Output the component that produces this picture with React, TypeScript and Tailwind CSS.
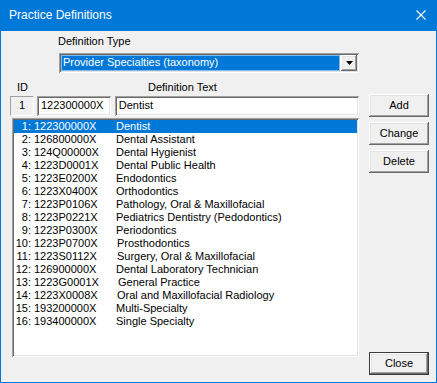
import React from 'react';

const font = "font-['Liberation_Sans',Arial,sans-serif]";

const raised =
  'shadow-[inset_-1px_-1px_0_#696969,inset_1px_1px_0_#ffffff,inset_-2px_-2px_0_#a0a0a0,inset_2px_2px_0_#e3e3e3]';
const sunken =
  'shadow-[inset_1px_1px_0_#a0a0a0,inset_-1px_-1px_0_#ffffff,inset_2px_2px_0_#696969,inset_-2px_-2px_0_#e3e3e3]';

const specialties: [number, string, string, number][] = [
  [1, '122300000X', 'Dentist', 0],
  [2, '126800000X', 'Dental Assistant', 0],
  [3, '124Q00000X', 'Dental Hygienist', 0],
  [4, '1223D0001X', 'Dental Public Health', 0],
  [5, '1223E0200X', 'Endodontics', 0],
  [6, '1223X0400X', 'Orthodontics', 0],
  [7, '1223P0106X', 'Pathology, Oral & Maxillofacial', 0],
  [8, '1223P0221X', 'Pediatrics Dentistry (Pedodontics)', 0],
  [9, '1223P0300X', 'Periodontics', 0],
  [10, '1223P0700X', 'Prosthodontics', 1],
  [11, '1223S0112X', 'Surgery, Oral & Maxillofacial', 1],
  [12, '126900000X', 'Dental Laboratory Technician', 0],
  [13, '1223G0001X', 'General Practice', 2],
  [14, '1223X0008X', 'Oral and Maxillofacial Radiology', 1],
  [15, '193200000X', 'Multi-Specialty', 0],
  [16, '193400000X', 'Single Specialty', 0],
];

// extra tab offset some rows have in the original listbox
const nudge = ['ml-0', 'ml-[1px]', 'ml-[2px]'];

function Button({ label, isDefault }: { label: string; isDefault?: boolean }) {
  const face = (
    <div className={`flex h-full w-full items-center justify-center bg-[#f0f0f0] ${raised}`}>
      {label}
    </div>
  );
  if (isDefault) {
    return <div className="h-[23px] w-[60px] border border-[#3c3c3c]">{face}</div>;
  }
  return <div className="h-[23px] w-[60px]">{face}</div>;
}

export default function App() {
  return (
    <div className={`flex h-[383px] w-[437px] flex-col bg-[#0078d7] text-[11px] leading-[13px] text-black ${font}`}>
      {/* title bar */}
      <div className="flex h-[31px] shrink-0 items-center justify-between pl-[9px] pr-[11px] text-[12px] text-white">
        <span className="pb-[1px]">Practice Definitions</span>
        <svg width="10" height="10" viewBox="0 0 10 10" className="mb-[1px]">
          <path d="M0.5 0.5 L9.5 9.5 M9.5 0.5 L0.5 9.5" stroke="#fff" strokeWidth="1.1" />
        </svg>
      </div>

      <div className="mx-px mb-px flex flex-1 bg-[#f0f0f0] pl-[9px]">
        {/* left column */}
        <div className="flex w-[349px] flex-col pt-[4px]">
          <div className="ml-[48px] h-[13px]">Definition Type</div>

          <div className={`ml-[49px] mt-[5px] flex h-[20px] w-[300px] bg-white p-[2px] ${sunken}`}>
            <div className="flex flex-1 items-center bg-[#0078d7] pl-[2px] pb-[1px] text-white outline outline-1 -outline-offset-1 outline-[#7fb9eb]">
              Provider Specialties (taxonomy)
            </div>
            <div className={`ml-[1px] flex w-[16px] items-center justify-center bg-[#f0f0f0] ${raised}`}>
              <svg width="7" height="4" viewBox="0 0 7 4">
                <path d="M0 0 H7 L3.5 4 Z" fill="#000" />
              </svg>
            </div>
          </div>

          <div className="mt-[8px] flex h-[13px]">
            <span className="ml-[7px] w-[131px]">ID</span>
            <span>Definition Text</span>
          </div>

          <div className="mt-[2px] flex h-[20px]">
            <div className="flex w-[24px] items-center justify-center border border-t-[#a0a0a0] border-l-[#a0a0a0] border-r-white border-b-white pb-[1px]">
              1
            </div>
            <div className={`ml-[3px] flex w-[74px] items-center bg-white pl-[4px] pb-[2px] ${sunken}`}>
              122300000X
            </div>
            <div className={`ml-[4px] flex w-[245px] items-center bg-white pl-[4px] pb-[2px] ${sunken}`}>
              Dentist
            </div>
          </div>

          <div className={`ml-[2px] mt-[2px] h-[239px] w-[347px] bg-white p-[2px] ${sunken}`}>
            {specialties.map(([id, code, name, off], i) => (
              <div
                key={id}
                className={`flex h-[13px] items-center whitespace-nowrap ${i === 0 ? 'bg-[#0078d7] text-white' : ''}`}
              >
                <span className="w-[17px] text-right">{id}:</span>
                <span className="ml-[3px] w-[82px]">{code}</span>
                <span className={nudge[off]}>{name}</span>
              </div>
            ))}
          </div>
        </div>

        {/* right column */}
        <div className="ml-[10px] flex flex-col pt-[63px] pb-[7px]">
          <div className="flex flex-col gap-[5px]">
            <Button label="Add" />
            <Button label="Change" />
            <Button label="Delete" />
          </div>
          <div className="mt-auto">
            <Button label="Close" isDefault />
          </div>
        </div>
      </div>
    </div>
  );
}
